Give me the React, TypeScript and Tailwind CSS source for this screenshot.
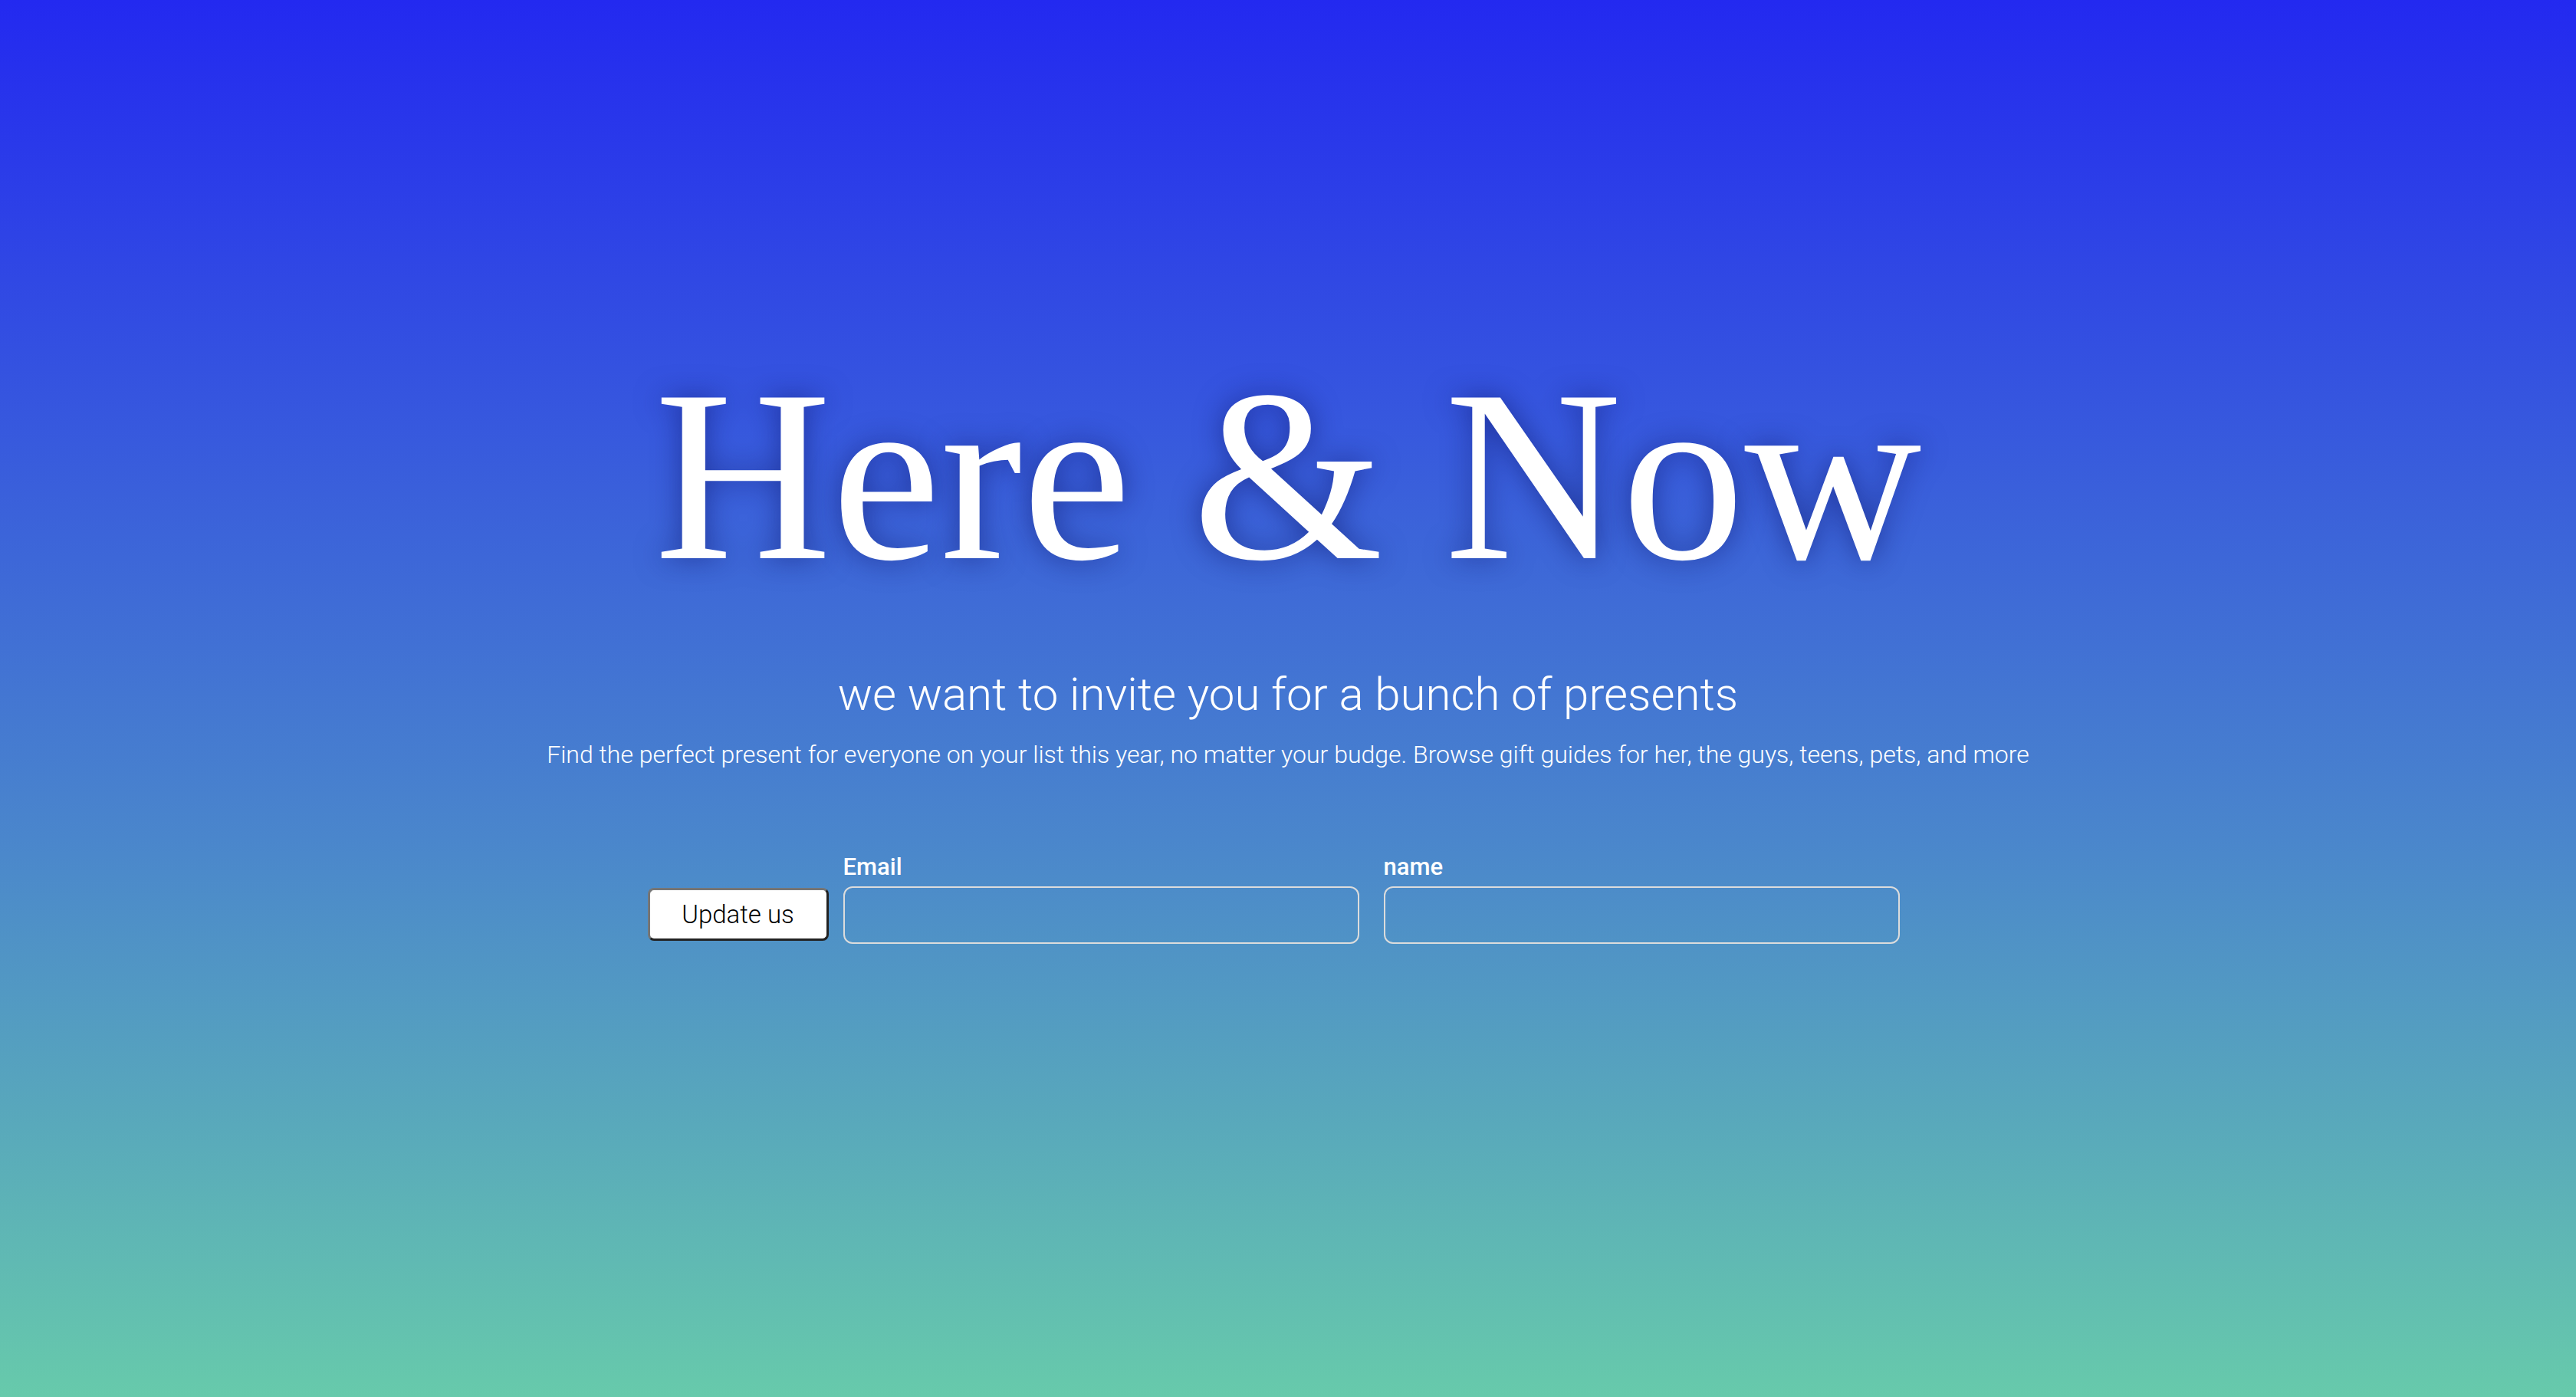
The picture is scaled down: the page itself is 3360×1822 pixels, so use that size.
export default function App() {
  return (
    <div className="h-screen overflow-hidden w-full bg-[linear-gradient(180deg,#2329f0_0%,#4a86cc_60%,#67caab_100%)] flex flex-col items-center text-white">
      <h1
        className="mt-[460px] text-[320px] leading-none text-white [text-shadow:0_0_36px_rgba(15,25,110,0.6)]"
        style={{ fontFamily: '"Liberation Serif", "Times New Roman", serif' }}
      >
        Here &amp; Now
      </h1>

      <h2
        className="mt-[96px] text-[60px] leading-none font-light"
        style={{ fontFamily: 'Roboto, Inter, "Noto Sans", sans-serif' }}
      >
        we want to invite you for a bunch of presents
      </h2>
      <p
        className="mt-[32px] text-[32px] leading-none font-light"
        style={{ fontFamily: 'Roboto, Inter, "Noto Sans", sans-serif' }}
      >
        Find the perfect present for everyone on your list this year, no matter your budge. Browse gift guides for her, the guys, teens, pets, and more
      </p>

      <form
        className="mt-[115px] mr-[38px] flex items-end gap-[19px]"
        style={{ fontFamily: 'Roboto, Inter, "Noto Sans", sans-serif' }}
        onSubmit={(e) => e.preventDefault()}
      >
        <button
          type="submit"
          className="mb-[4px] w-[236px] h-[69px] bg-white text-black text-[33px] font-light rounded-[8px] border-[3px] border-t-[#767676] border-l-[#767676] border-b-[#222] border-r-[#222]"
        >
          Update us
        </button>
        <div className="flex gap-[32px]">
          <label className="flex flex-col">
            <span className="text-[31px] font-medium leading-none mb-[10px]">Email</span>
            <input className="w-[673px] h-[75px] rounded-[12px] border-2 border-[#dcdcdc] bg-transparent outline-none" />
          </label>
          <label className="flex flex-col">
            <span className="text-[31px] font-medium leading-none mb-[10px]">name</span>
            <input className="w-[673px] h-[75px] rounded-[12px] border-2 border-[#dcdcdc] bg-transparent outline-none" />
          </label>
        </div>
      </form>
    </div>
  );
}
